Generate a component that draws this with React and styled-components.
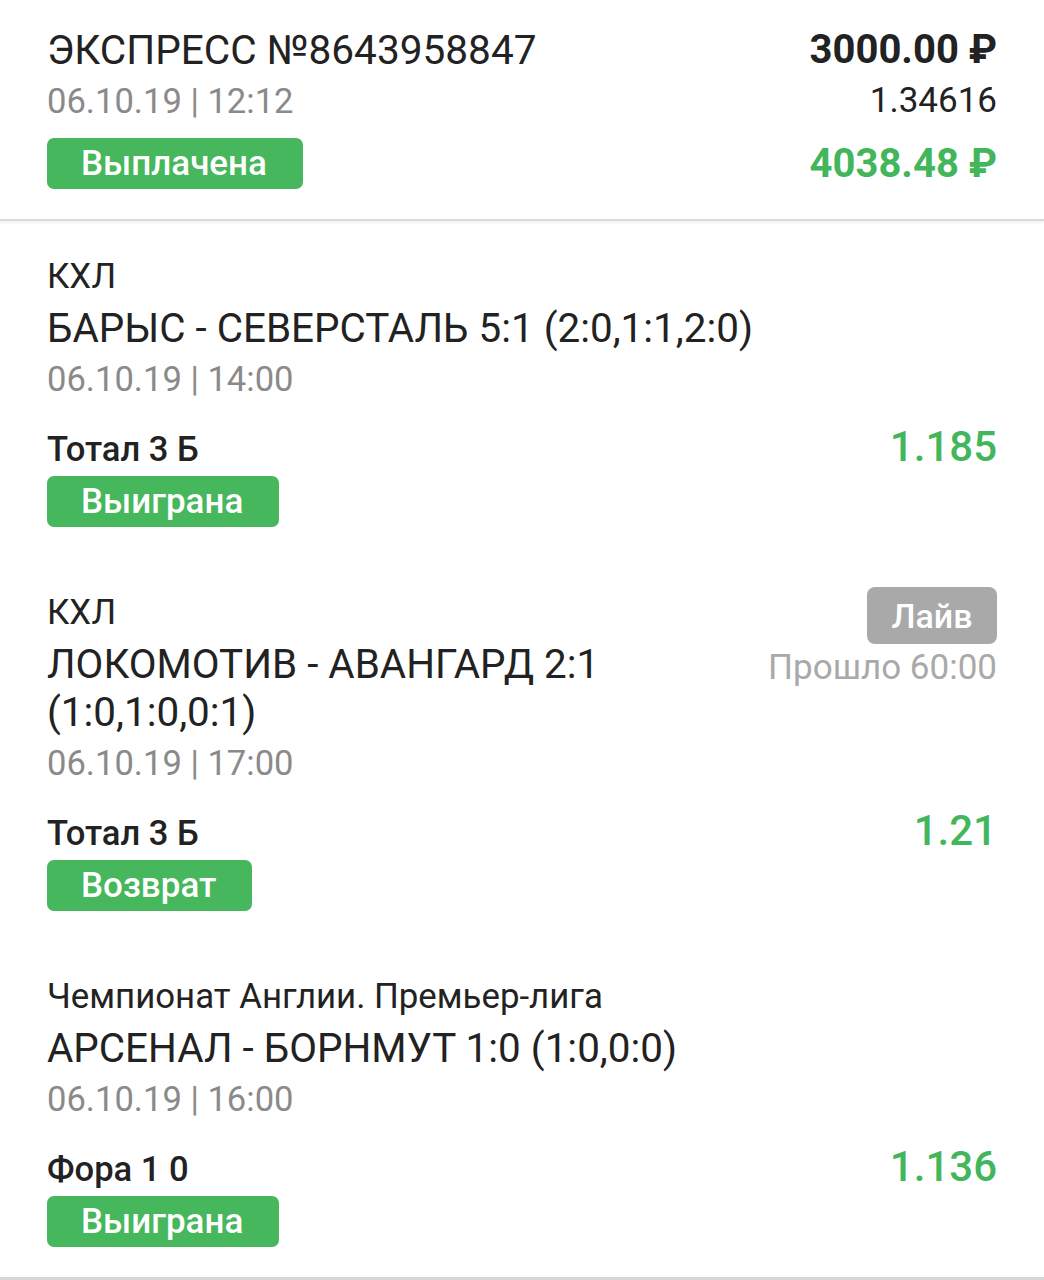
import React from "react";
import styled, { createGlobalStyle } from "styled-components";

const Global = createGlobalStyle`
  html, body { margin: 0; padding: 0; background: #ffffff; }
  body { font-family: Roboto, "Noto Sans", "Liberation Sans", sans-serif; color: #212121; -webkit-font-smoothing: antialiased; }
  * { box-sizing: border-box; }
`;

const Page = styled.div`
  width: 1044px;
  background: #fff;
`;

const Header = styled.header`
  display: grid;
  grid-template-columns: 1fr auto;
  align-items: center;
  padding: 26px 47px 30px;
  border-bottom: 2px solid #d9d9d9;
  box-shadow: 0 2px 3px rgba(0, 0, 0, 0.06);
`;

const Title = styled.div`
  font-size: 40.6px;
  line-height: 48px;
  font-weight: 400;
  color: #222;
`;

const Amount = styled.div`
  font-size: 40px;
  line-height: 48px;
  font-weight: 700;
  color: ${(p) => (p.$green ? "#43b65b" : "#222")};
  text-align: right;
  margin-top: ${(p) => p.$mt || 0}px;
`;

const Coef = styled.div`
  font-size: 35px;
  line-height: 48px;
  color: #222;
  text-align: right;
  margin-top: 3px;
`;

const DateText = styled.div`
  font-size: 34.6px;
  line-height: 48px;
  color: #8a8a8a;
  margin-top: ${(p) => p.$mt || 0}px;
`;

const Badge = styled.div`
  justify-self: start;
  align-self: start;
  display: inline-flex;
  align-items: center;
  height: 51px;
  padding: 0 36px 0 34px;
  border-radius: 7px;
  background: #46b75c;
  color: #fff;
  font-size: 35px;
  font-weight: 500;
  margin-top: ${(p) => p.$mt || 0}px;
`;

const Section = styled.section`
  padding: 33px 47px 30px;
`;

const TopRow = styled.div`
  display: flex;
  justify-content: space-between;
  align-items: flex-start;
  gap: 24px;
`;

const Info = styled.div`
  display: flex;
  flex-direction: column;
  min-width: 0;
`;

const League = styled.div`
  font-size: 34.8px;
  line-height: 44px;
  color: #222;
`;

const Match = styled.div`
  font-size: 40.4px;
  line-height: 48px;
  color: #222;
  margin-top: 7px;
`;

const LiveBox = styled.div`
  display: flex;
  flex-direction: column;
  align-items: flex-end;
  flex-shrink: 0;
`;

const LiveBadge = styled.div`
  height: 57px;
  width: 130px;
  display: flex;
  align-items: center;
  justify-content: center;
  border-radius: 8px;
  background: #a9a9a9;
  color: #fff;
  font-size: 34px;
  font-weight: 500;
  margin-top: -3px;
`;

const Elapsed = styled.div`
  font-size: 35px;
  line-height: 44px;
  color: #a9a9a9;
  margin-top: 2px;
`;

const BetRow = styled.div`
  display: flex;
  justify-content: space-between;
  align-items: baseline;
  margin-top: 22px;
`;

const Market = styled.div`
  font-size: 34.6px;
  line-height: 44px;
  font-weight: 500;
  color: #222;
`;

const Odds = styled.div`
  font-size: 42px;
  line-height: 44px;
  font-weight: 500;
  color: #43b65b;
`;

const BottomLine = styled.div`
  height: 6px;
  background: #d6d6d6;
`;

const bets = [
  {
    league: "КХЛ",
    match: "БАРЫС - СЕВЕРСТАЛЬ 5:1 (2:0,1:1,2:0)",
    date: "06.10.19 | 14:00",
    market: "Тотал 3 Б",
    odds: "1.185",
    status: "Выиграна",
  },
  {
    league: "КХЛ",
    match: "ЛОКОМОТИВ - АВАНГАРД 2:1 (1:0,1:0,0:1)",
    date: "06.10.19 | 17:00",
    market: "Тотал 3 Б",
    odds: "1.21",
    status: "Возврат",
    live: "Прошло 60:00",
  },
  {
    league: "Чемпионат Англии. Премьер-лига",
    match: "АРСЕНАЛ - БОРНМУТ 1:0 (1:0,0:0)",
    date: "06.10.19 | 16:00",
    market: "Фора 1 0",
    odds: "1.136",
    status: "Выиграна",
  },
];

export default function App() {
  return (
    <Page>
      <Global />
      <Header>
        <Title>ЭКСПРЕСС №8643958847</Title>
        <Amount>3000.00 ₽</Amount>
        <DateText $mt={3}>06.10.19 | 12:12</DateText>
        <Coef>1.34616</Coef>
        <Badge $mt={13}>Выплачена</Badge>
        <Amount $green $mt={13}>4038.48 ₽</Amount>
      </Header>
      {bets.map((b, i) => (
        <Section key={i}>
          <TopRow>
            <Info>
              <League>{b.league}</League>
              <Match>{b.match}</Match>
              <DateText $mt={2}>{b.date}</DateText>
            </Info>
            {b.live && (
              <LiveBox>
                <LiveBadge>Лайв</LiveBadge>
                <Elapsed>{b.live}</Elapsed>
              </LiveBox>
            )}
          </TopRow>
          <BetRow>
            <Market>{b.market}</Market>
            <Odds>{b.odds}</Odds>
          </BetRow>
          <Badge $mt={5}>{b.status}</Badge>
        </Section>
      ))}
      <BottomLine />
    </Page>
  );
}
